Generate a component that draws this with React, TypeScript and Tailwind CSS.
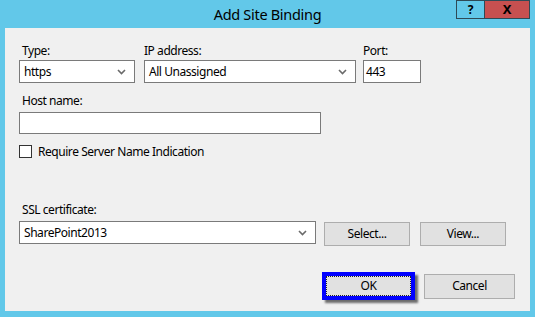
import React from "react";

const font = { fontFamily: '"Noto Sans", "Liberation Sans", sans-serif' };

function Chevron() {
  return (
    <svg width="9" height="6" viewBox="0 0 9 6" className="shrink-0">
      <path d="M1 1 L4.5 4.5 L8 1" fill="none" stroke="#6a6a6a" strokeWidth="1.6" />
    </svg>
  );
}

function Select({ value, className }: { value: string; className: string }) {
  return (
    <div
      className={`flex h-[23px] items-center justify-between border border-[#7a7a7a] bg-white pl-[4px] pr-[8px] ${className}`}
    >
      <span className="leading-none">{value}</span>
      <Chevron />
    </div>
  );
}

function Button({ label, className }: { label: string; className: string }) {
  return (
    <div
      className={`flex items-center justify-center border border-[#adadad] bg-[#e1e1e1] ${className}`}
    >
      {label}
    </div>
  );
}

export default function App() {
  return (
    <div
      className="flex h-[317px] w-[535px] flex-col bg-[#62c8e9] text-[12px] tracking-[-0.45px] text-black"
      style={font}
    >
      {/* title bar */}
      <div className="relative h-[28px] shrink-0">
        <div className="pt-[4px] text-center text-[14.5px] leading-[20px] tracking-[-0.3px]">Add Site Binding</div>
        <div className="absolute right-[5px] top-0 flex h-[19px]">
          <div className="flex w-[29px] items-center justify-center border border-[#2e4a56] bg-[#62c8e9] text-[12px] font-bold tracking-normal">
            ?
          </div>
          <div className="flex w-[45px] items-center justify-center border border-l-0 border-[#2e4a56] bg-[#c75050] text-[13px] font-bold tracking-normal">
            X
          </div>
        </div>
      </div>

      {/* body */}
      <div className="mx-[5px] mb-[6px] flex flex-1 flex-col bg-[#f0f0f0] pl-[14px] pr-[15px] pt-[15px]">
        <div className="flex">
          <div className="flex w-[116px] flex-col">
            <div className="mb-[2px] pl-[3px] leading-[15px]">Type:</div>
            <Select value="https" className="w-[116px]" />
          </div>
          <div className="ml-[9px] flex w-[212px] flex-col">
            <div className="mb-[2px] leading-[15px]">IP address:</div>
            <Select value="All Unassigned" className="w-[212px]" />
          </div>
          <div className="ml-[7px] flex w-[58px] flex-col">
            <div className="mb-[2px] leading-[15px]">Port:</div>
            <div className="flex h-[23px] items-center border border-[#7a7a7a] bg-white pl-[2px]">443</div>
          </div>
        </div>

        <div className="mt-[10px] mb-[4px] pl-[3px] leading-[15px]">Host name:</div>
        <div className="h-[22px] w-[302px] border border-[#7a7a7a] bg-white" />

        <div className="mt-[10px] flex items-center">
          <div className="h-[13px] w-[13px] border border-[#333] bg-white" />
          <span className="ml-[6px] leading-[15px]">Require Server Name Indication</span>
        </div>

        <div className="mt-[43px] mb-[4px] pl-[3px] leading-[15px]">SSL certificate:</div>
        <div className="flex items-start">
          <Select value="SharePoint2013" className="w-[297px]" />
          <Button label="Select..." className="ml-[8px] mt-px h-[24px] w-[86px]" />
          <Button label="View..." className="ml-[10px] mt-px h-[24px] w-[86px]" />
        </div>

        <div className="mt-[26px] flex items-center justify-end">
          <div className="flex h-[28px] w-[93px] border-4 border-[#0000ff] shadow-[3px_3px_2px_rgba(0,0,0,0.55)]">
            <div className="flex flex-1 items-center justify-center border border-dotted border-[#222] bg-[#e1e1e1]">
              OK
            </div>
          </div>
          <Button label="Cancel" className="ml-[9px] h-[25px] w-[91px]" />
        </div>
      </div>
    </div>
  );
}
